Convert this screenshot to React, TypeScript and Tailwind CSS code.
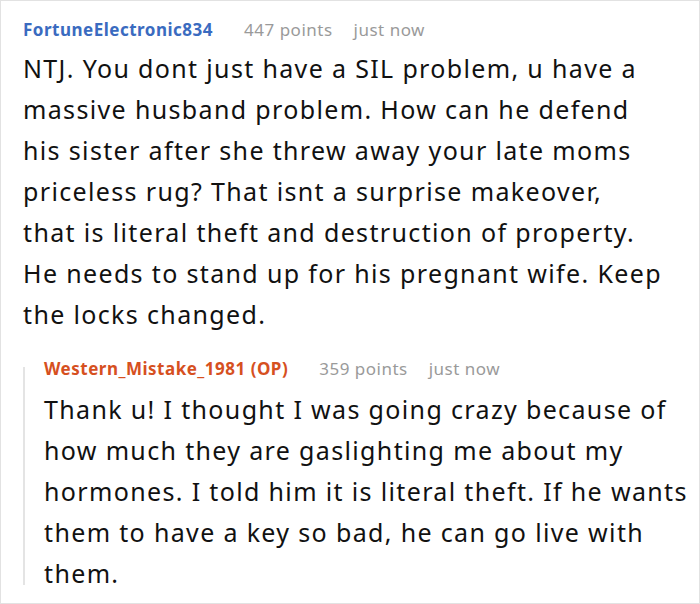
const font = { fontFamily: '"Noto Sans", "Open Sans", sans-serif' };

const Meta = ({ name, color, points }: { name: string; color: string; points: number }) => (
  <div className="flex items-center text-[17px] leading-6 tracking-[0.5px]">
    <span className={`font-bold ${color}`}>{name}</span>
    <span className="ml-[31px] text-[#9a9a9a]">{points} points</span>
    <span className="ml-[21px] text-[#9a9a9a]">just now</span>
  </div>
);

const Lines = ({ lines }: { lines: string[] }) => (
  <div className="text-[25px] leading-[41px] tracking-[1.35px] text-[#111]">
    {lines.map((l, i) => (
      <div key={i} className="whitespace-nowrap">
        {l}
      </div>
    ))}
  </div>
);

export default function App() {
  return (
    <div
      style={font}
      className="w-[700px] h-[604px] overflow-hidden border border-[#e2e2e2] bg-white pl-[22px] pt-[17px]"
    >
      <Meta name="FortuneElectronic834" color="text-[#3a6bc0]" points={447} />
      <div className="mt-[6px]">
        <Lines
          lines={[
            "NTJ. You dont just have a SIL problem, u have a",
            "massive husband problem. How can he defend",
            "his sister after she threw away your late moms",
            "priceless rug? That isnt a surprise makeover,",
            "that is literal theft and destruction of property.",
            "He needs to stand up for his pregnant wife. Keep",
            "the locks changed.",
          ]}
        />
      </div>
      <div className="mt-[22px] flex">
        <div className="mt-[10px] h-[218px] w-[2px] shrink-0 bg-[#e4e4e4]" />
        <div className="pl-[19px]">
          <Meta name="Western_Mistake_1981 (OP)" color="text-[#d6501f]" points={359} />
          <div className="mt-2">
            <Lines
              lines={[
                "Thank u! I thought I was going crazy because of",
                "how much they are gaslighting me about my",
                "hormones. I told him it is literal theft. If he wants",
                "them to have a key so bad, he can go live with",
                "them.",
              ]}
            />
          </div>
        </div>
      </div>
    </div>
  );
}
